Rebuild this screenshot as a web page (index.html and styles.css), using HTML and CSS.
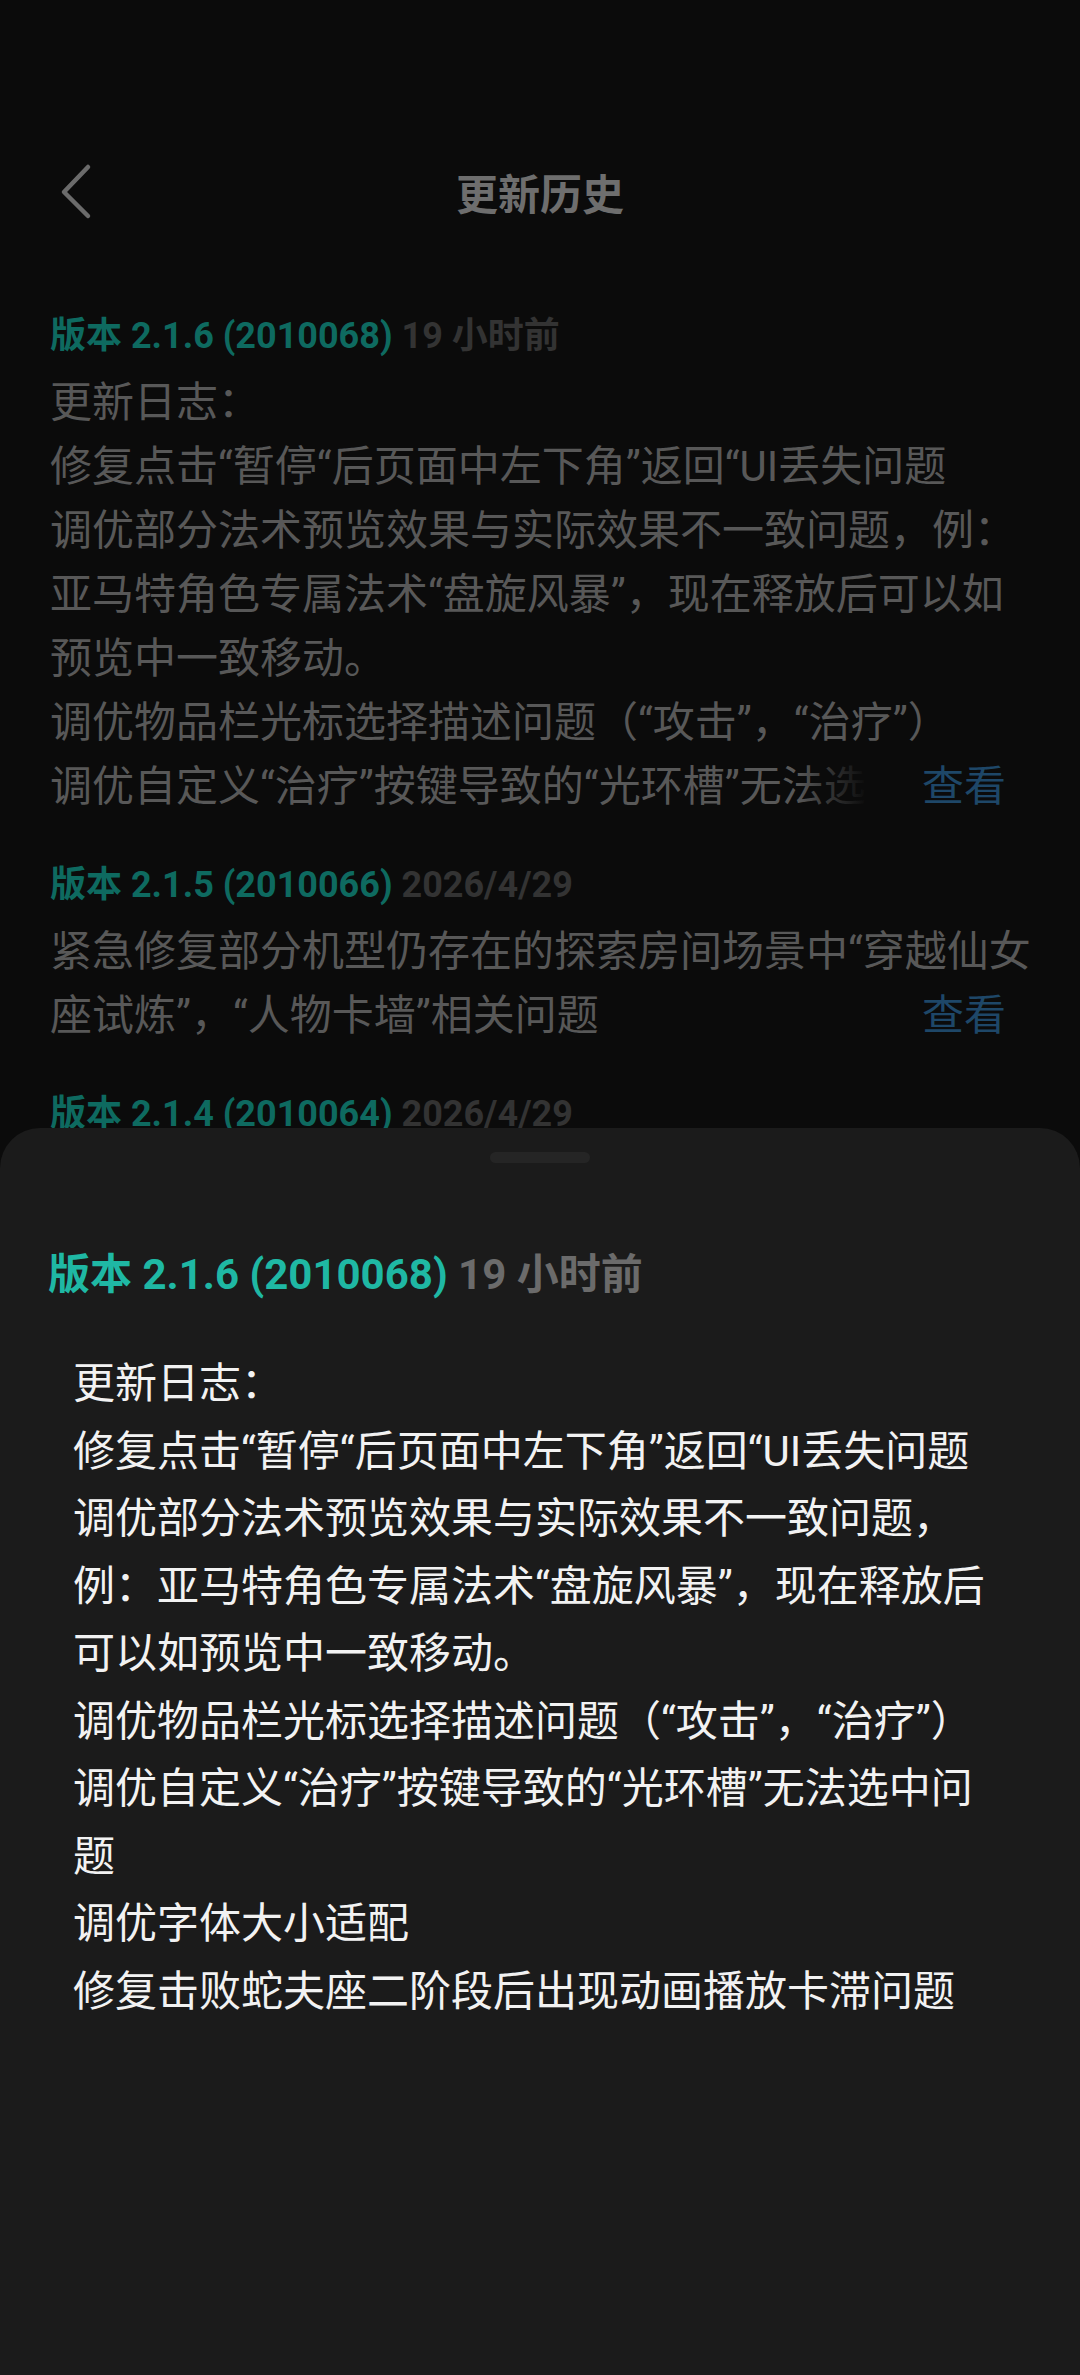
FILE: index.html
```html
<!DOCTYPE html>
<html lang="zh-CN">
<head>
  <meta charset="UTF-8" />
  <meta name="viewport" content="width=device-width, initial-scale=1.0"/>
  <title>更新历史</title>
  <link rel="stylesheet" href="styles.css">
</head>
<body>

  <header class="topbar">
    <div class="back">
      <svg width="40" height="60" viewBox="0 0 40 60">
        <polyline points="31,6 7,31 31,55" fill="none" stroke="#6b6b6b" stroke-width="4.5" stroke-linecap="round" stroke-linejoin="round"/>
      </svg>
    </div>
    <h1 class="title">更新历史</h1>
    <div></div>
  </header>

  <div class="history">
    <div class="entry">
      <div class="entry-head"><span class="ver">版本 2.1.6 (2010068)</span> <span class="when">19 小时前</span></div>
      <div class="entry-body clamp">
        <p>更新日志：</p>
        <p>修复点击“暂停“后页面中左下角”返回“UI丢失问题</p>
        <p>调优部分法术预览效果与实际效果不一致问题，例：亚马特角色专属法术“盘旋风暴”，现在释放后可以如预览中一致移动。</p>
        <p>调优物品栏光标选择描述问题（“攻击”，“治疗”）</p>
        <p>调优自定义“治疗”按键导致的“光环槽”无法选中问题</p>
        <p>调优字体大小适配</p>
        <p>修复击败蛇夫座二阶段后出现动画播放卡滞问题</p>
        <span class="more">查看</span>
      </div>
    </div>

    <div class="entry">
      <div class="entry-head"><span class="ver">版本 2.1.5 (2010066)</span> <span class="when">2026/4/29</span></div>
      <div class="entry-body">
        <p>紧急修复部分机型仍存在的探索房间场景中“穿越仙女座试炼”，“人物卡墙”相关问题</p>
        <span class="more">查看</span>
      </div>
    </div>

    <div class="entry">
      <div class="entry-head"><span class="ver">版本 2.1.4 (2010064)</span> <span class="when">2026/4/29</span></div>
      <div class="entry-body">
        <p>修复部分机型进入探索房间后画面异常问题</p>
        <span class="more">查看</span>
      </div>
    </div>
  </div>

  <div class="sheet">
    <div class="handle"></div>
    <div class="sheet-head"><span class="ver">版本 2.1.6 (2010068)</span> <span class="when">19 小时前</span></div>
    <div class="sheet-body">
      <p>更新日志：</p>
      <p>修复点击“暂停“后页面中左下角”返回“UI丢失问题</p>
      <p>调优部分法术预览效果与实际效果不一致问题，例：亚马特角色专属法术“盘旋风暴”，现在释放后可以如预览中一致移动。</p>
      <p>调优物品栏光标选择描述问题（“攻击”，“治疗”）</p>
      <p>调优自定义“治疗”按键导致的“光环槽”无法选中问题</p>
      <p>调优字体大小适配</p>
      <p>修复击败蛇夫座二阶段后出现动画播放卡滞问题</p>
    </div>
  </div>

</body>
</html>
```

FILE: styles.css
```css
body {
  font-family: Roboto, "Noto Sans CJK SC", sans-serif;
  margin: 0;
  background-color: #0b0b0b;
  height: 2375px;
  overflow: hidden;
  position: relative;
}

p {
  margin: 0;
}

.topbar {
  display: grid;
  grid-template-columns: 1fr auto 1fr;
  align-items: center;
  height: 100px;
  padding-top: 141px;
}

.back {
  padding-left: 57px;
  display: flex;
  align-items: center;
}

.title {
  margin: 0;
  font-size: 42px;
  font-weight: 700;
  color: #6e6e6e;
}

.history {
  padding: 71px 40px 0 50px;
}

.entry {
  margin-bottom: 42px;
}

.entry-head {
  font-size: 36px;
  font-weight: 700;
  line-height: 48px;
  white-space: nowrap;
}

.entry-head .ver {
  color: #0e6a60;
}

.entry-head .when {
  color: #333333;
}

.entry-body {
  position: relative;
  margin-top: 11px;
  font-size: 42px;
  line-height: 64px;
  color: #585858;
}

.entry-body.clamp {
  max-height: 448px;
  overflow: hidden;
}

/* fade the clipped line out before the link */
.more {
  position: absolute;
  right: 34px;
  bottom: 0;
  padding-left: 125px;
  color: #1e4768;
  background: linear-gradient(to right, rgba(11, 11, 11, 0), #0b0b0b 70px);
}

.sheet {
  position: absolute;
  top: 1128px;
  left: 0;
  right: 0;
  bottom: 0;
  background-color: #1b1b1b;
  border-radius: 40px 40px 0 0;
  padding: 0 48px;
}

.handle {
  width: 100px;
  height: 11px;
  margin: 24px auto 0;
  border-radius: 6px;
  background-color: #252525;
}

.sheet-head {
  margin-top: 84px;
  font-size: 42px;
  font-weight: 700;
  line-height: 56px;
  white-space: nowrap;
}

.sheet-head .ver {
  color: #1fb8a4;
}

.sheet-head .when {
  color: #6b6b6b;
}

.sheet-body {
  margin-top: 47px;
  padding: 0 34px 0 25px;
  font-size: 42px;
  line-height: 67.5px;
  color: #f2f2f2;
}
```
